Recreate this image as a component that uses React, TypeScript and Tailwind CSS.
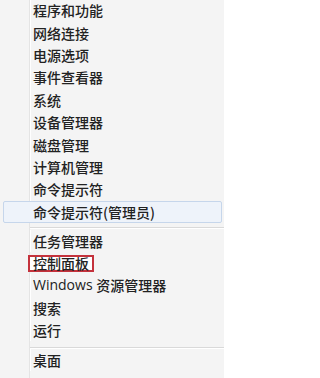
import React from "react";

const font = { fontFamily: '"Segoe UI", "Noto Sans CJK SC", "Noto Sans", sans-serif' };

function Row({ label }: { label: React.ReactNode }) {
  return (
    <div className="flex h-[22.4px]">
      <div className="w-[29px] shrink-0" />
      <div className="flex-1 flex items-center border-l border-[#e4e4e4]">
        <div className="flex-1 h-full flex items-center border-l border-white pl-[2px] whitespace-pre">
          {label}
        </div>
      </div>
    </div>
  );
}

export default function App() {
  const top = ["程序和功能", "网络连接", "电源选项", "事件查看器", "系统", "设备管理器", "磁盘管理", "计算机管理", "命令提示符"];
  return (
    <div
      className="w-[224px] h-[378px] overflow-hidden bg-[#f4f4f4] text-[14px] leading-[16px] font-medium text-[#222222]"
      style={font}
    >
      <div className="-mt-[1px]">
        {top.map((t) => (
          <Row key={t} label={t} />
        ))}
        <div className="h-[22.4px] mx-[3px] mr-[2px] flex items-center border border-[#c6d6eb] rounded-[2px] bg-[#eef3fa] pl-[29px]">
          命令提示符(管理员)
        </div>
        <div className="flex h-[6.6px]">
          <div className="w-[29px] shrink-0" />
          <div className="flex-1 border-l border-[#e4e4e4] pt-[4.5px]">
            <div className="border-t border-[#d9d9d9]" />
            <div className="border-t border-white" />
          </div>
        </div>
        <Row label="任务管理器" />
        <div className="flex h-[22.4px]">
          <div className="w-[29px] shrink-0" />
          <div className="flex-1 flex items-center border-l border-[#e4e4e4]">
            <div className="-ml-[2px] border-2 border-[#c4323c] bg-white px-[3px] leading-[13px]">
              控制面板
            </div>
          </div>
        </div>
        <Row
          label={
            <>
              <span className="font-['Open_Sans',sans-serif] font-normal">Windows </span>
              资源管理器
            </>
          }
        />
        <Row label="搜索" />
        <Row label="运行" />
        <div className="flex h-[7.5px]">
          <div className="w-[29px] shrink-0" />
          <div className="flex-1 border-l border-[#e4e4e4] pt-[5.5px]">
            <div className="border-t border-[#d9d9d9]" />
            <div className="border-t border-white" />
          </div>
        </div>
        <Row label="桌面" />
        <div className="flex h-[20px]">
          <div className="w-[29px] shrink-0" />
          <div className="flex-1 border-l border-[#e4e4e4]" />
        </div>
      </div>
    </div>
  );
}
